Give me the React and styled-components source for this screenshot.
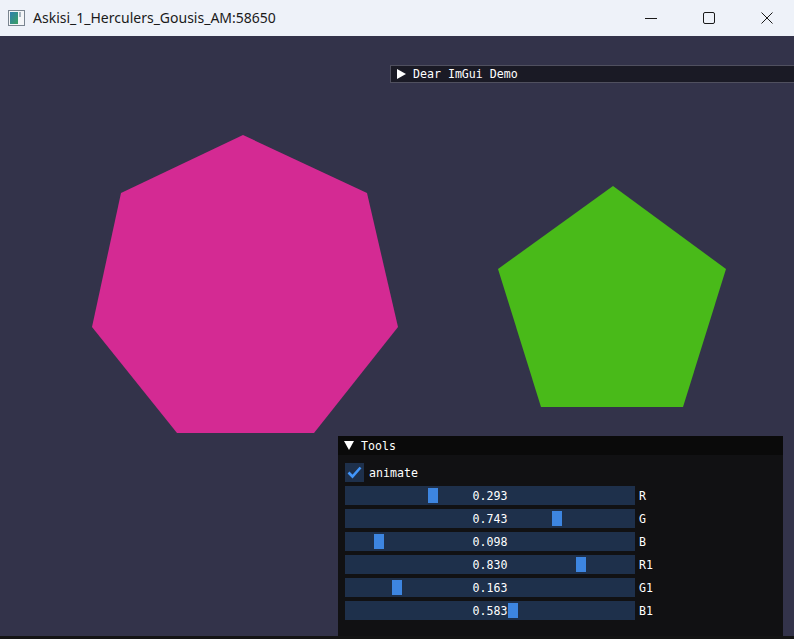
import styled, { createGlobalStyle } from "styled-components";

const GlobalStyle = createGlobalStyle`
  html, body {
    margin: 0;
    padding: 0;
    overflow: hidden;
    background: #141414;
  }
`;

const Frame = styled.div`
  width: 794px;
  height: 639px;
  display: flex;
  flex-direction: column;
  background: #141414;
`;

const TitleBar = styled.div`
  height: 36px;
  flex: none;
  display: flex;
  align-items: center;
  background: #eef2f9;
  font-family: "Segoe UI", "Noto Sans", "Liberation Sans", sans-serif;
  font-size: 14px;
  color: #1a1a1a;
`;

const AppIcon = styled.svg`
  margin-left: 8px;
  margin-right: 8px;
  flex: none;
`;

const TitleText = styled.span`
  flex: 1;
  white-space: nowrap;
  padding-bottom: 1px;
`;

const Controls = styled.div`
  display: flex;
  height: 100%;
  margin-right: -2px;
`;

const CtrlButton = styled.div`
  width: 58px;
  height: 100%;
  display: flex;
  align-items: center;
  justify-content: center;
`;

const Canvas = styled.div`
  position: relative;
  height: 600px;
  flex: none;
  background: #33334a;
  overflow: hidden;
`;

const Scene = styled.svg`
  display: block;
`;

const imguiFont = `
  font-family: "DejaVu Sans Mono", "Liberation Mono", monospace;
  font-size: 11.6px;
  color: #ffffff;
`;

const CollapsedWindow = styled.div`
  position: absolute;
  left: 390px;
  top: 29px;
  width: 410px;
  height: 18px;
  box-sizing: border-box;
  background: #1a1a25;
  border: 1px solid #50505f;
  display: flex;
  align-items: center;
  gap: 7px;
  padding-left: 6px;
  ${imguiFont}
`;

const ToolsWindow = styled.div`
  position: absolute;
  left: 338px;
  top: 400px;
  width: 445px;
  height: 200px;
  background: #111113;
  display: flex;
  flex-direction: column;
  ${imguiFont}
`;

const WindowTitle = styled.div`
  height: 19px;
  flex: none;
  background: #0a0a0a;
  display: flex;
  align-items: center;
  gap: 7px;
  padding-left: 6px;
`;

const Arrow = styled.svg`
  flex: none;
`;

const WindowBody = styled.div`
  padding: 8px 7px;
  display: flex;
  flex-direction: column;
  gap: 4px;
`;

const Row = styled.div`
  display: flex;
  align-items: center;
  height: 19px;
  gap: 4px;
`;

const CheckBox = styled.div`
  width: 19px;
  height: 19px;
  background: #1e304b;
  display: flex;
  align-items: center;
  justify-content: center;
  margin-right: 1px;
`;

const SliderFrame = styled.div`
  position: relative;
  width: 290px;
  height: 19px;
  background: #1e304b;
  display: flex;
  align-items: center;
  justify-content: center;
`;

const Grab = styled.div`
  position: absolute;
  top: 2px;
  width: 10px;
  height: 15px;
  background: #3d85e0;
`;

const SliderValue = styled.span`
  position: relative;
  line-height: 19px;
  padding-top: 1px;
`;

const Label = styled.span`
  line-height: 19px;
  padding-top: 1px;
`;

const sliders = [
  { label: "R", value: 0.293 },
  { label: "G", value: 0.743 },
  { label: "B", value: 0.098 },
  { label: "R1", value: 0.83 },
  { label: "G1", value: 0.163 },
  { label: "B1", value: 0.583 },
];

const Slider = ({ label, value }) => (
  <Row>
    <SliderFrame>
      <Grab style={{ left: `${2 + value * 276}px` }} />
      <SliderValue>{value.toFixed(3)}</SliderValue>
    </SliderFrame>
    <Label>{label}</Label>
  </Row>
);

const App = () => {
  return (
    <>
      <GlobalStyle />
      <Frame>
        <TitleBar>
          <AppIcon width="17" height="16" viewBox="0 0 17 16">
            <rect x="0.5" y="0.5" width="16" height="15" fill="#f4f6f8" stroke="#7a8590" />
            <defs>
              <linearGradient id="ic" x1="0" y1="0" x2="1" y2="1">
                <stop offset="0" stopColor="#2f7fb0" />
                <stop offset="1" stopColor="#3aa060" />
              </linearGradient>
            </defs>
            <rect x="2" y="2" width="8" height="12" fill="url(#ic)" />
            <rect x="11" y="2" width="2" height="5" fill="#a8b4be" />
          </AppIcon>
          <TitleText>Askisi_1_Herculers_Gousis_AM:58650</TitleText>
          <Controls>
            <CtrlButton>
              <svg width="12" height="12" viewBox="0 0 12 12">
                <line x1="0" y1="6.5" x2="12" y2="6.5" stroke="#1a1a1a" strokeWidth="1" />
              </svg>
            </CtrlButton>
            <CtrlButton>
              <svg width="12" height="12" viewBox="0 0 12 12">
                <rect x="0.5" y="0.5" width="11" height="11" rx="1.5" fill="none" stroke="#1a1a1a" strokeWidth="1" />
              </svg>
            </CtrlButton>
            <CtrlButton>
              <svg width="12" height="12" viewBox="0 0 12 12">
                <path d="M0.5 0.5 L11.5 11.5 M11.5 0.5 L0.5 11.5" stroke="#1a1a1a" strokeWidth="1" />
              </svg>
            </CtrlButton>
          </Controls>
        </TitleBar>
        <Canvas>
          <Scene width="794" height="600" viewBox="0 36 794 600">
            <polygon
              points="243,135 367,193 398,327 314,433 177,433 92,327 121,193"
              fill="#d42a93"
            />
            <polygon
              points="613,186 726,269 683,407 541,407 498,269"
              fill="#49ba19"
            />
          </Scene>
          <CollapsedWindow>
            <Arrow width="9" height="10" viewBox="0 0 9 10">
              <polygon points="0,0 9,5 0,10" fill="#ffffff" />
            </Arrow>
            <span>Dear ImGui Demo</span>
          </CollapsedWindow>
          <ToolsWindow>
            <WindowTitle>
              <Arrow width="10" height="9" viewBox="0 0 10 9">
                <polygon points="0,0 10,0 5,9" fill="#ffffff" />
              </Arrow>
              <span>Tools</span>
            </WindowTitle>
            <WindowBody>
              <Row>
                <CheckBox>
                  <svg width="15" height="13" viewBox="0 0 15 13">
                    <polyline points="1.5,6.5 5.5,10.5 13.5,1.5" fill="none" stroke="#4296fa" strokeWidth="2.6" />
                  </svg>
                </CheckBox>
                <Label>animate</Label>
              </Row>
              {sliders.map((s) => (
                <Slider key={s.label} label={s.label} value={s.value} />
              ))}
            </WindowBody>
          </ToolsWindow>
        </Canvas>
      </Frame>
    </>
  );
};

export default App;
